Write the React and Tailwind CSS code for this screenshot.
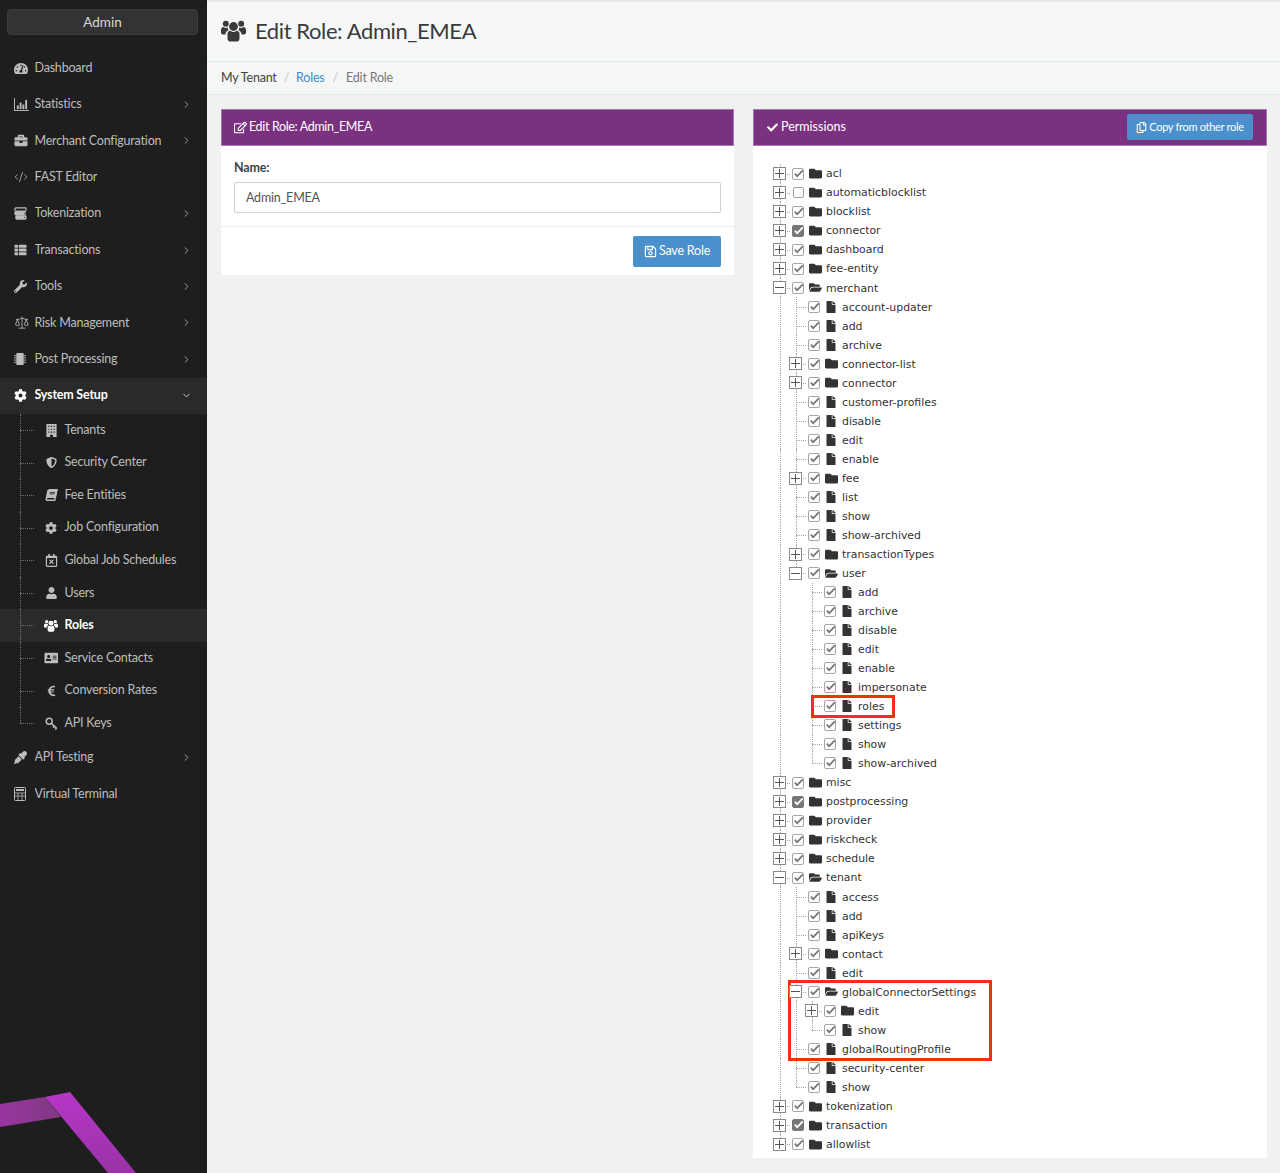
// App.jsx - Edit Role page with sidebar and permission tree
import React from 'react';
import {
  FaTachometerAlt, FaBriefcase, FaThList, FaWrench, FaMicrochip, FaCog, FaShieldAlt, FaBook,
  FaRegCalendarTimes, FaUser, FaAddressCard, FaEuroSign, FaEyeDropper, FaRegEdit, FaCheck,
  FaRegSave, FaRegCopy, FaFolder, FaFolderOpen, FaFile,
} from 'react-icons/fa';
import { ChevronRight, ChevronDown, CodeXml, Scale } from 'lucide-react';

function UsersIcon({ className }) {
  return (
    <svg viewBox="0 0 25 22" className={className} fill="currentColor">
      <circle cx="12.5" cy="7" r="4.4" />
      <circle cx="4.8" cy="4.2" r="3" />
      <circle cx="20.2" cy="4.2" r="3" />
      <path d="M6.5 14.5c0-2 1.4-3.2 3-3.2 1 .8 1.9 1.2 3 1.2s2-.4 3-1.2c1.6 0 3 1.2 3 3.2v4.4c0 1.9-1.2 3.1-3 3.1h-6c-1.8 0-3-1.2-3-3.1z" />
      <path d="M0 11c0-2.2 1-3.6 2.6-3.6.7.7 1.500 1 2.300 1 .6 0 1.200-.2 1.700-.5 0 1.100.4 2.100 1.100 2.900-1.900.6-3.100 2.100-3.200 4.200H2c-1.200 0-2-.8-2-2z" />
      <path d="M25 11c0-2.200-1-3.600-2.600-3.600-.7.7-1.500 1-2.300 1-.6 0-1.200-.2-1.700-.5 0 1.100-.4 2.100-1.100 2.900 1.900.6 3.100 2.100 3.200 4.200H23c1.200 0 2-.8 2-2z" />
    </svg>
  );
}

function ChartIcon({ className }) {
  return (
    <svg viewBox="0 0 16 14" className={className} fill="currentColor">
      <rect x="0" y="0" width="1" height="14" />
      <rect x="0" y="13" width="16" height="1" />
      <rect x="3" y="8" width="2" height="4" />
      <rect x="6" y="5" width="2" height="7" />
      <rect x="9" y="7" width="2" height="5" />
      <rect x="12" y="2" width="2" height="10" />
    </svg>
  );
}

function TokenIcon({ className }) {
  return (
    <svg viewBox="0 0 14 14" className={className} fill="none" stroke="currentColor" strokeWidth="1.2">
      <rect x="1" y="1" width="12" height="3.4" rx="1" />
      <rect x="1" y="5.2" width="11" height="3.4" rx="1" fill="currentColor" />
      <rect x="2" y="9.6" width="11" height="3.4" rx="1" fill="currentColor" />
      <circle cx="11.5" cy="7" r=".6" fill="#1e1e1e" stroke="none" />
      <circle cx="11.5" cy="11.300" r=".6" fill="#1e1e1e" stroke="none" />
    </svg>
  );
}

function BuildingIcon({ className }) {
  return (
    <svg viewBox="0 0 11 14" className={className} fill="currentColor">
      <path fillRule="evenodd" d="M0 0h11v14H7v-2.500H4V14H0zM2 2v1.300h1.300V2zM4.800 2v1.300h1.400V2zM7.700 2v1.300H9V2zM2 5v1.300h1.300V5zM4.800 5v1.300h1.400V5zM7.700 5v1.300H9V5zM2 8v1.300h1.300V8zM4.800 8v1.300h1.400V8zM7.700 8v1.300H9V8z" />
    </svg>
  );
}

function SkewBook({ className }) {
  return <FaBook className={`${className} -skew-x-12`} />;
}

function KeyIcon({ className }) {
  return (
    <svg viewBox="0 0 14 14" className={className} fill="none" stroke="currentColor" strokeWidth="1.600">
      <circle cx="4.500" cy="4.500" r="3.200" />
      <path d="M7 7l5.500 5M10 10l-1.500 1.500M12.500 12l-1.500 1.500" />
    </svg>
  );
}

function CalculatorIcon({ className }) {
  return (
    <svg viewBox="0 0 12 14" className={className} fill="none" stroke="currentColor">
      <rect x=".5" y=".5" width="11" height="13" rx="1" />
      <rect x="2" y="2" width="8" height="2" fill="currentColor" stroke="none" />
      <path d="M.5 6h11M.5 9h11M4 6v7.500M8 6v7.500" strokeWidth=".8" />
    </svg>
  );
}

const sm = 'h-[13px] w-[13px]';

const mainMenu = [
  { label: 'Dashboard', icon: FaTachometerAlt, size: 'h-[13px] w-[14px]' },
  { label: 'Statistics', icon: ChartIcon, size: 'h-[13px] w-[15px]', arrow: true },
  { label: 'Merchant Configuration', icon: FaBriefcase, size: 'h-[13px] w-[14px]', arrow: true },
  { label: 'FAST Editor', icon: CodeXml, size: 'h-[14px] w-[14px]', thin: true },
  { label: 'Tokenization', icon: TokenIcon, size: 'h-[13px] w-[13px]', arrow: true },
  { label: 'Transactions', icon: FaThList, size: 'h-[12px] w-[13px]', arrow: true },
  { label: 'Tools', icon: FaWrench, size: sm, arrow: true },
  { label: 'Risk Management', icon: Scale, size: 'h-[15px] w-[16px]', thin: true, arrow: true },
  { label: 'Post Processing', icon: FaMicrochip, size: 'h-[14px] w-[12px]', arrow: true },
];

const subMenu = [
  { label: 'Tenants', icon: BuildingIcon, size: 'h-[13px] w-[11px]' },
  { label: 'Security Center', icon: FaShieldAlt, size: 'h-[13px] w-[11px]' },
  { label: 'Fee Entities', icon: SkewBook, size: 'h-[12px] w-[11px]' },
  { label: 'Job Configuration', icon: FaCog, size: 'h-[12px] w-[12px]' },
  { label: 'Global Job Schedules', icon: FaRegCalendarTimes, size: sm },
  { label: 'Users', icon: FaUser, size: 'h-[12px] w-[11px]' },
  { label: 'Roles', icon: UsersIcon, size: 'h-[13px] w-[14px]' },
  { label: 'Service Contacts', icon: FaAddressCard, size: 'h-[12px] w-[15px]' },
  { label: 'Conversion Rates', icon: FaEuroSign, size: 'h-[12px] w-[9px]' },
  { label: 'API Keys', icon: KeyIcon, size: sm },
];

const leaf = (names) => names.map((name) => ({ name }));

// folder: closed folder, children: open folder, state: 'full' | 'none'
const tree = [
  { name: 'acl', folder: true },
  { name: 'automaticblocklist', folder: true, state: 'none' },
  { name: 'blocklist', folder: true },
  { name: 'connector', folder: true, state: 'full' },
  { name: 'dashboard', folder: true },
  { name: 'fee-entity', folder: true },
  {
    name: 'merchant',
    children: [
      ...leaf(['account-updater', 'add', 'archive']),
      { name: 'connector-list', folder: true },
      { name: 'connector', folder: true },
      ...leaf(['customer-profiles', 'disable', 'edit', 'enable']),
      { name: 'fee', folder: true },
      ...leaf(['list', 'show', 'show-archived']),
      { name: 'transactionTypes', folder: true },
      {
        name: 'user',
        children: leaf(['add', 'archive', 'disable', 'edit', 'enable', 'impersonate', 'roles', 'settings', 'show', 'show-archived']),
      },
    ],
  },
  { name: 'misc', folder: true },
  { name: 'postprocessing', folder: true, state: 'full' },
  { name: 'provider', folder: true },
  { name: 'riskcheck', folder: true },
  { name: 'schedule', folder: true },
  {
    name: 'tenant',
    children: [
      ...leaf(['access', 'add', 'apiKeys']),
      { name: 'contact', folder: true },
      { name: 'edit' },
      {
        name: 'globalConnectorSettings',
        children: [{ name: 'edit', folder: true }, { name: 'show' }],
      },
      ...leaf(['globalRoutingProfile', 'security-center', 'show']),
    ],
  },
  { name: 'tokenization', folder: true },
  { name: 'transaction', folder: true, state: 'full' },
  { name: 'allowlist', folder: true },
];

function MenuRow({ item, open }) {
  const Icon = item.icon;
  return (
    <div className={`flex h-[36.4px] items-center pl-[14px] pr-[15px] text-[12.5px] tracking-[-0.2px] ${open ? 'bg-[#2a2a2a] font-bold text-white' : 'text-[#bdbdbd]'}`}>
      <span className="flex w-[20.5px] shrink-0 items-center">
        <Icon className={item.size} {...(item.thin ? { strokeWidth: 1.3 } : {})} />
      </span>
      <span className="flex-1 truncate">{item.label}</span>
      {item.arrow && <ChevronRight className="h-[11px] w-[11px] text-[#a8a8a8]" />}
      {open && <ChevronDown className="h-[11px] w-[11px] text-[#cfcfcf]" />}
    </div>
  );
}

function SubRow({ item, last }) {
  const Icon = item.icon;
  return (
    <div className={`relative flex h-[32.55px] items-center pl-[44px] text-[12.5px] tracking-[-0.2px] ${item.label === 'Roles' ? 'bg-[#2a2a2a] font-bold text-white' : 'text-[#bdbdbd]'}`}>
      <span className={`absolute left-[20px] top-0 border-l border-dotted border-[#6f6f6f] ${last ? 'h-1/2' : 'h-full'}`} />
      <span className="absolute left-[20px] top-1/2 w-[14px] border-t border-dotted border-[#6f6f6f]" />
      <span className="flex w-[20.5px] shrink-0 items-center justify-center pr-[6px]">
        <Icon className={item.size} />
      </span>
      <span>{item.label}</span>
    </div>
  );
}

function Sidebar() {
  return (
    <aside className="relative w-[207px] shrink-0 overflow-hidden bg-[#1e1e1e]">
      <div className="pl-[7px] pr-[9px] pt-[9px]">
        <div className="flex h-[26px] items-center justify-center rounded-sm border border-[#3c3c3c] bg-[#333333] text-[13.5px] text-[#d8d8d8]">Admin</div>
      </div>
      <nav className="mt-[15px]">
        {mainMenu.map((item) => <MenuRow key={item.label} item={item} />)}
        <MenuRow item={{ label: 'System Setup', icon: FaCog, size: sm }} open />
        {subMenu.map((item, i) => <SubRow key={item.label} item={item} last={i === subMenu.length - 1} />)}
        <MenuRow item={{ label: 'API Testing', icon: FaEyeDropper, size: sm, arrow: true }} />
        <MenuRow item={{ label: 'Virtual Terminal', icon: CalculatorIcon, size: 'h-[14px] w-[12px]' }} />
      </nav>
      <svg viewBox="0 0 207 81" className="absolute bottom-0 left-0 h-[81px] w-[207px]">
        <defs>
          <linearGradient id="bandA" x1="0" x2="1" y1="0" y2="0">
            <stop offset="0" stopColor="#9a35a0" />
            <stop offset="1" stopColor="#7d3a80" />
          </linearGradient>
          <linearGradient id="bandB" x1="0" x2="0" y1="0" y2="1">
            <stop offset="0" stopColor="#b636c6" />
            <stop offset="1" stopColor="#9a33a6" />
          </linearGradient>
        </defs>
        <polygon points="0,12 45,5 61,25 0,35" fill="url(#bandA)" />
        <polygon points="45,5 70,0 136,81 108,81" fill="url(#bandB)" />
      </svg>
    </aside>
  );
}

function Checkbox({ state }) {
  if (state === 'none') {
    return <span className="block h-[11px] w-[11px] rounded-[2px] border border-[#a0a0a0] bg-white" />;
  }
  const full = state === 'full';
  return (
    <svg viewBox="0 0 12 12" className="h-[12px] w-[12px]">
      <rect x=".5" y=".5" width="11" height="11" rx="1.500" fill={full ? '#777' : '#fff'} stroke={full ? '#777' : '#a5a5a5'} />
      <path d="M2.800 5.600 L5.200 8.200 L10.800 2.400" fill="none" stroke={full ? '#fff' : '#777'} strokeWidth="1.700" />
    </svg>
  );
}

function Expander({ open }) {
  return (
    <span className="relative z-10 -ml-px flex h-[13px] w-[13px] items-center justify-center border border-[#8a8a8a] bg-white">
      <span className="absolute h-px w-[9px] bg-[#555]" />
      {!open && <span className="absolute h-[9px] w-px bg-[#555]" />}
    </span>
  );
}

// One dotted column of the tree: a pass-through line for an ancestor
function Guide({ line }) {
  return (
    <span className="flex h-full w-4 shrink-0 justify-center">
      {line && <span className="h-full border-l border-dotted border-[#a8a8a8]" />}
    </span>
  );
}

function TreeRow({ node, guides, last }) {
  const hasBox = node.folder || node.children;
  const Icon = node.children ? FaFolderOpen : node.folder ? FaFolder : FaFile;
  return (
    <div className="flex h-[19.04px] items-center text-[10.9px] text-[#333333]">
      {guides.map((g, i) => <Guide key={i} line={g} />)}
      <span className="relative flex h-full w-4 shrink-0 items-center justify-center">
        <span className={`absolute left-[7.5px] top-0 border-l border-dotted border-[#a8a8a8] ${last ? 'h-1/2' : 'h-full'}`} />
        <span className="absolute left-[8px] top-1/2 w-[10px] border-t border-dotted border-[#a8a8a8]" />
        {hasBox && <Expander open={!!node.children} />}
      </span>
      <span className="ml-[4px] flex w-[12px] shrink-0 items-center justify-center">
        <Checkbox state={node.state} />
      </span>
      <span className="ml-[4px] flex w-[14px] shrink-0 items-center justify-center">
        <Icon className={node.folder || node.children ? 'h-[13px] w-[13px] text-[#333]' : 'h-[12px] w-[10px] text-[#333]'} />
      </span>
      <span className="ml-[4px] whitespace-nowrap pt-[2px] font-['DejaVu_Sans',sans-serif]">{node.name}</span>
    </div>
  );
}

function TreeList({ nodes, guides }) {
  return nodes.map((node, i) => {
    const last = i === nodes.length - 1;
    return (
      <React.Fragment key={node.name + i}>
        <TreeRow node={node} guides={guides} last={last} />
        {node.children && <TreeList nodes={node.children} guides={[...guides, !last]} />}
      </React.Fragment>
    );
  });
}

function PanelHead({ children }) {
  return (
    <div className="flex h-[37px] items-center justify-between border border-[#a878b4] bg-[#7a3180] pb-px text-[12.5px] tracking-[-0.2px] text-white">
      {children}
    </div>
  );
}

export default function App() {
  return (
    <div className="flex min-h-[1173px] font-['Lato',sans-serif]">
      <Sidebar />
      <main className="flex-1 bg-[#f0f2f2]">
        <header className="flex h-[62px] items-center gap-[9px] border-y border-t-2 border-t-[#e8eaea] border-b-[#e4e7e7] bg-[#f6f8f8] pb-[2px] pl-[14px]">
          <UsersIcon className="h-[23px] w-[25px] text-[#3a3a3a]" />
          <h1 className="text-[22px] tracking-[-0.4px] text-[#3a3a3a]">Edit Role: Admin_EMEA</h1>
        </header>
        <div className="flex h-[33px] items-center border-b border-[#e6e9e9] bg-[#f5f6f6] pl-[14px] pt-[1px] text-[12.5px] tracking-[-0.2px]">
          <span className="text-[#444]">My Tenant</span>
          <span className="mx-[7px] text-[#c8c8c8]">/</span>
          <span className="text-[#428bca]">Roles</span>
          <span className="mx-[8px] text-[#c8c8c8]">/</span>
          <span className="text-[#777]">Edit Role</span>
        </div>
        <div className="flex items-start gap-[19px] pl-[14px] pr-[14px] pt-[14px]">
          <section className="w-[513px] bg-white">
            <PanelHead>
              <span className="flex items-center gap-[2px] pl-[12px] tracking-[-0.35px]"><FaRegEdit className="h-[13px] w-[13px]" />Edit Role: Admin_EMEA</span>
            </PanelHead>
            <div className="border-b border-[#e8eded] px-[13px] pb-[13px] pt-[13px]">
              <label className="block text-[12.5px] font-bold leading-[18px] tracking-[-0.2px] text-[#444]">Name:</label>
              <input
                readOnly
                value="Admin_EMEA"
                className="mt-[5px] block h-[31px] w-full rounded-[2px] border border-[#d0d0d0] bg-white px-[11px] text-[12.5px] tracking-[-0.2px] text-[#555] outline-none"
              />
            </div>
            <div className="flex justify-end px-[13px] pb-[8px] pt-[9px]">
              <button className="flex h-[31px] w-[88px] items-center justify-center gap-[2px] rounded-[2px] bg-[#4a90cd] text-[12.5px] tracking-[-0.2px] text-white">
                <FaRegSave className="h-[13px] w-[13px]" />Save Role
              </button>
            </div>
          </section>
          <section className="w-[514px] bg-white">
            <PanelHead>
              <span className="flex items-center gap-[3px] pl-[13px] tracking-[0px]"><FaCheck className="h-[11px] w-[11px]" />Permissions</span>
              <button className="mr-[13px] flex h-[26px] w-[126px] items-center justify-center gap-[2px] rounded-[2px] bg-[#4a90cd] text-[11px] tracking-[-0.3px] text-white">
                <FaRegCopy className="h-[11px] w-[11px]" />Copy from other role
              </button>
            </PanelHead>
            <div className="relative pb-[4px] pl-[19px] pt-[18px]">
              <TreeList nodes={tree} guides={[]} />
              <span className="absolute left-[58px] top-[549px] h-[23px] w-[84px] border-[3px] border-[#f0300f]" />
              <span className="absolute left-[35px] top-[834px] h-[81px] w-[204px] border-[3px] border-[#f0300f]" />
            </div>
          </section>
        </div>
      </main>
    </div>
  );
}
